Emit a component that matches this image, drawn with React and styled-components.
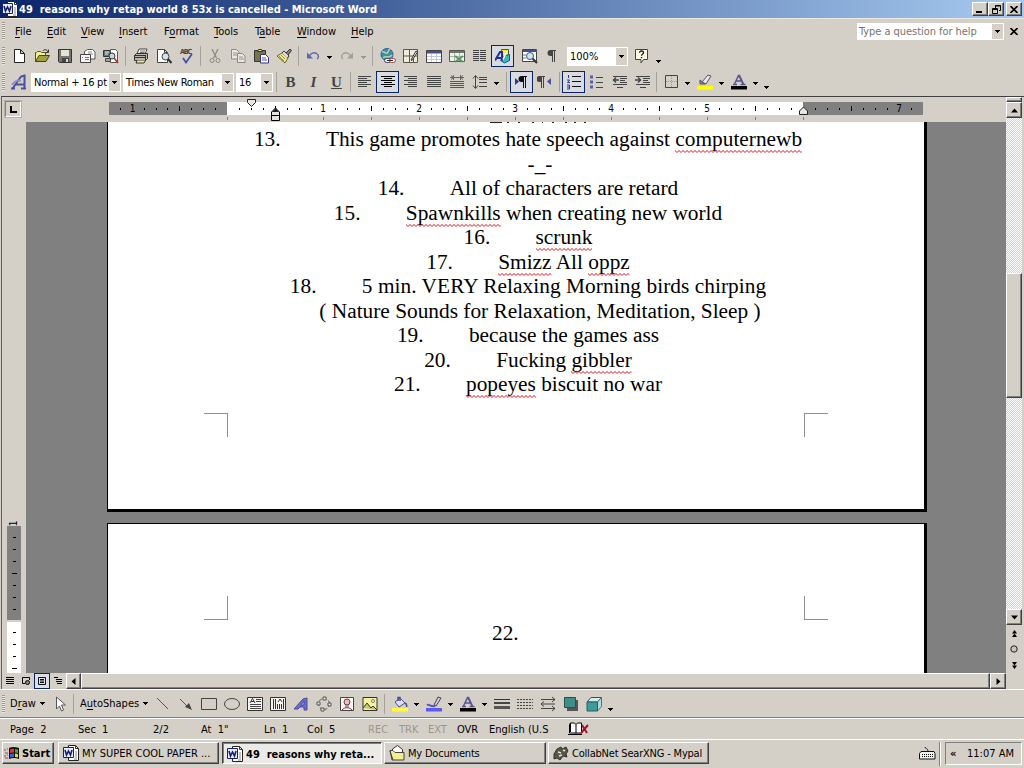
import React from 'react';
import styled, { createGlobalStyle, css } from 'styled-components';

const GlobalStyle = createGlobalStyle`
    body {
        margin: 0;
        overflow: hidden;
        background: #d4d0c8;
        font-family: 'DejaVu Sans Condensed', 'DejaVu Sans', sans-serif;
        font-size: 11px;
        color: #000;
    }
    * {
        box-sizing: border-box;
    }
`;

const raised = css`
    background: #d4d0c8;
    border: 1px solid;
    border-color: #fff #404040 #404040 #fff;
    box-shadow: inset -1px -1px 0 #808080;
`;

const Screen = styled.div`
    width: 1024px;
    height: 768px;
    display: flex;
    flex-direction: column;
    background: #d4d0c8;
    white-space: pre;
    cursor: default;
`;

/* title bar */
const TitleBar = styled.div`
    height: 18px;
    flex: none;
    display: flex;
    align-items: center;
    padding: 0 2px;
    background: linear-gradient(90deg, #0a246a, #a6caf0);
    color: #fff;
`;
const TitleText = styled.div`
    flex: 1;
    padding-left: 1px;
    font-weight: bold;
`;
const WindowButton = styled.div`
    ${raised}
    width: 16px;
    height: 14px;
    margin-left: ${p => p.$gap || 0}px;
    display: flex;
    align-items: center;
    justify-content: center;
`;

/* menu bar */
const MenuBar = styled.div`
    height: 25px;
    flex: none;
    display: flex;
    align-items: center;
    border-top: 1px solid #ece9e2;
`;
const Handle = styled.div`
    width: 3px;
    height: 18px;
    margin: 0 ${p => p.$after || 2}px 0 2px;
    background: repeating-linear-gradient(#9c9890 0 1px, #ece9e2 1px 2px);
`;
const MenuItem = styled.div`
    width: ${p => p.$w}px;
    u {
        text-underline-offset: 2px;
    }
`;
const Question = styled.div`
    width: 147px;
    height: 17px;
    margin-left: auto;
    display: flex;
    align-items: center;
    background: #fff;
    color: #77736d;
    padding-left: 2px;
    letter-spacing: -0.05px;
`;
const ComboArrow = styled.div`
    width: 11px;
    height: calc(100% - 2px);
    margin: 1px 1px 1px auto;
    background: #d4d0c8;
    display: flex;
    align-items: center;
    justify-content: center;
`;
const CloseDoc = styled.div`
    width: 20px;
    display: flex;
    justify-content: center;
`;

/* toolbars */
const Toolbar = styled.div`
    height: ${p => p.$h || 26}px;
    flex: none;
    display: flex;
    align-items: center;
    margin-bottom: ${p => p.$after || 0}px;
    ${p => p.$line && css`
        border-top: 1px solid #fff;
        border-bottom: 1px solid #808080;
    `}
`;
const ToolButton = styled.div`
    width: 23px;
    height: 22px;
    flex: none;
    display: flex;
    align-items: center;
    justify-content: center;
    border: 1px solid ${p => (p.$on ? '#0a246a' : 'transparent')};
    background: ${p => (p.$on ? '#d9dbe2' : 'transparent')};
`;
const DropArrow = styled.div`
    width: 11px;
    flex: none;
    display: flex;
    justify-content: center;
    padding-top: ${p => (p.$low ? 11 : 2)}px;
`;
const Separator = styled.div`
    width: ${p => p.$w}px;
    height: 20px;
    flex: none;
    display: flex;
    justify-content: center;
    &::before {
        content: '';
        width: 1px;
        background: ${p => (p.$blank ? 'transparent' : '#a6a299')};
    }
`;
const Combo = styled.div`
    width: ${p => p.$w}px;
    height: 19px;
    flex: none;
    margin: 0 ${p => p.$after || 0}px 0 ${p => p.$before || 0}px;
    padding-left: 3px;
    display: flex;
    align-items: center;
    background: #fff;
    letter-spacing: ${p => p.$spacing || 0}px;
`;
const TextButton = styled.div`
    width: ${p => p.$w}px;
    flex: none;
    display: flex;
    align-items: center;
    gap: 4px;
    padding-left: ${p => p.$pad}px;
    u {
        text-underline-offset: 2px;
    }
`;

/* work area */
const WorkArea = styled.div`
    height: 593px;
    flex: none;
    display: flex;
    border-top: 1px solid #404040;
    border-left: 1px solid #606060;
    margin-left: 1px;
`;
const Editor = styled.div`
    width: 1004px;
    display: flex;
    flex-direction: column;
`;
const RulerRow = styled.div`
    position: relative;
    height: 25px;
    flex: none;
    display: flex;
    align-items: flex-start;
    padding: 5px 0 0 3px;
`;
const TabBox = styled.div`
    width: 16px;
    height: 16px;
    margin: -1px 88px 0 0;
    border: 1px solid #808080;
    border-right-color: #fff;
    border-bottom-color: #fff;
    outline: 1px solid #b4b0a8;
    display: flex;
    align-items: center;
    justify-content: center;
`;
const RulerPart = styled.div`
    width: ${p => p.$w}px;
    height: 13px;
    display: flex;
    justify-content: ${p => p.$align || 'flex-start'};
    padding: 0 6px;
    background: ${p => (p.$margin ? '#808080' : '#fff')};
`;
const RulerCell = styled.div`
    width: 12px;
    display: flex;
    align-items: center;
    justify-content: center;
    font-size: 10px;
`;
const Tick = styled.div`
    width: 1px;
    height: ${p => (p.$long ? 5 : 2)}px;
    background: #000;
`;
const TabStops = styled.div`
    position: absolute;
    left: 225px;
    top: 20px;
    width: 577px;
    height: 3px;
    background: repeating-linear-gradient(90deg, #808080 0 1px, transparent 1px 48px);
`;
const Marker = styled.svg`
    position: absolute;
    left: ${p => p.$x}px;
    top: ${p => p.$y}px;
`;
const EditorBody = styled.div`
    height: 551px;
    flex: none;
    display: flex;
`;
const VRuler = styled.div`
    width: 24px;
    flex: none;
    padding: 398px 5px 0 5px;
    display: flex;
    flex-direction: column;
    overflow: hidden;
`;
const VRulerPart = styled.div`
    height: ${p => p.$h}px;
    flex: none;
    margin-bottom: 2px;
    padding-top: ${p => p.$pad}px;
    background: ${p => (p.$margin ? '#808080' : '#fff')};
    overflow: hidden;
`;
const VNumber = styled.div`
    height: 6px;
    display: flex;
    align-items: center;
    justify-content: center;
    span {
        transform: rotate(-90deg);
        font-size: 10px;
    }
`;
const VCell = styled.div`
    height: 12px;
    display: flex;
    align-items: center;
    justify-content: center;
`;
const VTick = styled.div`
    height: 1px;
    width: ${p => (p.$long ? 5 : 3)}px;
    background: #000;
`;
const Canvas = styled.div`
    width: 980px;
    height: 551px;
    flex: none;
    overflow: hidden;
    background: #808080;
    padding-left: 81px;
`;
const Page = styled.div`
    position: relative;
    width: 820px;
    height: ${p => p.$h}px;
    margin-bottom: 11px;
    background: #fff;
    border: solid #000;
    border-width: ${p => (p.$first ? '0 3px 3px 1px' : '1px 3px 0 1px')};
    padding: ${p => p.$top}px 0 0 168px;
`;
const Corner = styled.div`
    position: absolute;
    width: 24px;
    height: 24px;
    left: ${p => p.$x}px;
    top: ${p => p.$y}px;
    border: 0 solid #909090;
    ${p => p.$sides.map(s => `border-${s}-width: 1px;`).join('')}
`;
const Remnant = styled.svg`
    position: absolute;
    left: 382px;
    top: 0;
`;
const Line = styled.div`
    width: 528px;
    height: 24px;
    line-height: 24px;
    margin-left: ${p => (p.$numbered ? -12 : 0)}px;
    display: flex;
    justify-content: center;
    font-family: 'Liberation Serif', serif;
    font-size: 21.33px;
    letter-spacing: ${p => p.$spacing || 0}px;
    &:nth-child(even) {
        height: 25px;
    }
`;
const Num = styled.span`
    width: 72px;
    flex: none;
    letter-spacing: 0;
`;
const Misspelled = styled.span`
    position: relative;
`;
const Squiggle = styled.svg`
    position: absolute;
    left: 0;
    bottom: -2px;
    width: 100%;
    height: 3px;
`;

/* scroll bars */
const HScrollRow = styled.div`
    height: 16px;
    flex: none;
    display: flex;
`;
const ViewButton = styled.div`
    width: 16px;
    height: 16px;
    display: flex;
    align-items: center;
    justify-content: center;
    border: 1px solid ${p => (p.$on ? '#0a246a' : 'transparent')};
    background: ${p => (p.$on ? '#dcdee6' : 'transparent')};
`;
const ScrollButton = styled.div`
    ${raised}
    width: ${p => p.$w || 16}px;
    height: 16px;
    flex: none;
    display: flex;
    align-items: center;
    justify-content: center;
`;
const HThumb = styled.div`
    ${raised}
    flex: 1;
`;
const VScroll = styled.div`
    width: 16px;
    display: flex;
    flex-direction: column;
    background: #d4d0c8;
`;
const Splitter = styled.div`
    ${raised}
    height: 5px;
    flex: none;
`;
const Track = styled.div`
    height: ${p => p.$h}px;
    flex: none;
    background: conic-gradient(#d4d0c8 25%, #fff 0 50%, #d4d0c8 0 75%, #fff 0) 0 0 / 2px 2px;
`;
const VThumb = styled.div`
    ${raised}
    height: 125px;
    flex: none;
`;
const Browse = styled.div`
    height: 16px;
    display: flex;
    align-items: center;
    justify-content: center;
`;

/* status bar */
const StatusBar = styled.div`
    height: 21px;
    flex: none;
    display: flex;
    align-items: center;
    padding-left: 10px;
    border-top: 1px solid #fff;
`;
const StatusCell = styled.div`
    width: ${p => p.$w}px;
    overflow: hidden;
    color: ${p => (p.$off ? '#9a968e' : '#000')};
`;

/* taskbar */
const TaskBar = styled.div`
    height: 29px;
    flex: none;
    display: flex;
    align-items: flex-start;
    padding: 2px 2px 0;
    border-top: 1px solid #fff;
`;
const StartButton = styled.div`
    ${raised}
    width: 52px;
    height: 22px;
    display: flex;
    align-items: center;
    gap: 2px;
    padding-left: 1px;
    font-weight: bold;
`;
const Task = styled.div`
    ${raised}
    width: ${p => p.$w}px;
    height: 22px;
    margin-left: ${p => p.$gap}px;
    display: flex;
    align-items: center;
    gap: 3px;
    padding-left: 4px;
    letter-spacing: ${p => p.$spacing || 0}px;
    ${p => p.$on && css`
        font-weight: bold;
        padding-top: 2px;
        background: #eceae6;
        border-color: #404040 #fff #fff #404040;
        box-shadow: inset 1px 1px 0 #808080;
    `}
`;
const TrayIcon = styled.div`
    margin: 4px 3px 0 auto;
`;
const TraySep = styled.div`
    width: 2px;
    height: 24px;
    background: #808080;
    border-right: 1px solid #fff;
    margin-right: 4px;
`;
const Tray = styled.div`
    width: 77px;
    height: 23px;
    display: flex;
    align-items: center;
    justify-content: space-between;
    padding: 0 7px 0 4px;
    border: 1px solid;
    border-color: #808080 #fff #fff #808080;
`;

const Svg = styled.svg`
    display: block;
    flex: none;
`;

const Icon = ({ w = 16, h = 16, children }) => (
    <Svg width={w} height={h} viewBox={`0 0 ${w} ${h}`} fill="none" stroke="#333" strokeWidth="1">
        {children}
    </Svg>
);

const Down = ({ off }) => (
    <Svg width="5" height="3" viewBox="0 0 5 3" shapeRendering="crispEdges">
        <path d="M0 0h5v1h-1v1h-1v1h-1v-1h-1v-1h-1z" fill={off ? '#99958d' : '#000'} />
    </Svg>
);

const Arrow = ({ dir }) => {
    const d = {
        up: 'M3.5 0L7 4H0z',
        down: 'M0 0h7L3.5 4z',
        left: 'M4 0v7L0 3.5z',
        right: 'M0 0v7l4-3.5z'
    }[dir];
    return <Svg width="7" height="7" viewBox={dir === 'up' || dir === 'down' ? '0 -1.5 7 7' : '-1.5 0 7 7'}><path d={d} fill="#000" /></Svg>;
};

const Cross = () => (
    <Svg width="8" height="7" viewBox="0 0 8 7" stroke="#000" strokeWidth="1.6"><path d="M.5 0l7 7M7.5 0l-7 7" /></Svg>
);

const WordIcon = () => (
    <Icon>
        <path d="M5.5.5h7l3 3v12h-10z" fill="#fff" stroke="#222" />
        <path d="M12.5.5v3h3" />
        <path d="M13 6v7M11 14h3" stroke="#888" />
        <path d="M.5 2.500h10v10h-10z" fill="#e8ecff" stroke="#15206f" />
        <path d="M2 5l1.500 5L5.500 6l2 4L9 5" stroke="#15206f" strokeWidth="1.6" />
    </Icon>
);

// rows of [x, width, y]
const bars = (rows, color = '#444') => rows.map(([x, w, y], i) => (
    <rect key={i} x={x} y={y} width={w} height="1" fill={color} stroke="none" />
));

const Pilcrow = ({ x = 3, color = '#444' }) => (
    <g stroke={color}>
        <path d={`M${x + 9} 2.500h-5M${x + 5.5} 2v12M${x + 7.5} 2v12`} />
        <path d={`M${x + 5.5} 2h-2a2.500 2.500 0 0 0 0 6h2z`} fill={color} stroke="none" />
    </g>
);

const LetterA = ({ color = '#5a5490' }) => (
    <path d="M3.500 10L7.500 1.500h1L12.500 10M5 7h6M2 10.500h4M9.500 10.500h5M8 2l4 8" stroke={color} strokeWidth="1.5" />
);

const icons = {
    blank: <path d="M3.500 1.500h6l4 4v9h-10zM9.500 1.500v4h4" fill="#fff" stroke="#222" />,
    open: <>
        <path d="M1.500 13.500v-9h1l1-1h3l1 1h4v3" fill="#f3f08c" stroke="#55551a" />
        <path d="M1.500 13.500l3.500-6h10.500l-3.500 6z" fill="#a3a13c" stroke="#444410" />
        <path d="M9 3c1-2 4-2 5 1M14.500 1.500v3h-3" />
    </>,
    save: <>
        <path d="M1.500 1.500h13v13h-12l-1-1z" fill="#77776a" stroke="#333" />
        <path d="M4 2h8v6H4z" fill="#e4e2dc" stroke="none" />
        <path d="M5 10h7v4H5z" fill="#444" stroke="none" />
        <path d="M9 11h2v3H9z" fill="#ddd" stroke="none" />
    </>,
    mail: <>
        <path d="M4.500 6V3.500l3-2h5l2.500 2.500v7h-4" fill="#fff" stroke="#555" />
        <path d="M8 4h4M8 6h5" stroke="#888" />
        <path d="M.5 6.500h10v8h-10z" fill="#f6f4ee" stroke="#444" />
        <path d="M5 9.500h4M5 11.500h4M2 9.500h1" stroke="#777" />
    </>,
    search: <>
        <path d="M.5 2.500h8v6h-8z" fill="#5c7784" stroke="#333" />
        <path d="M7.500 1.500h5l2 2v11h-7z" fill="#fff" stroke="#555" />
        <path d="M2 4h4M2 6h3" stroke="#e6eef0" />
        <path d="M2.500 10.500h5v3h-5z" fill="#aaa69b" stroke="#444" />
        <circle cx="9" cy="8" r="3" fill="#c0dada" stroke="#333" />
        <path d="M11 10l4 5" stroke="#a33" strokeWidth="1.6" />
    </>,
    print: <>
        <path d="M4 6l2-5h8l-2 5z" fill="#fff" stroke="#444" />
        <path d="M7 3h5M6.500 4.500h5" stroke="#777" />
        <path d="M1.500 7.500l2-2h11v5l-2 2h-11z" fill="#bbb7ab" stroke="#333" />
        <path d="M2 9.500h11M12.500 7v6M4 12.500l-1 2.500h8l1.500-2.500" fill="#f0e9a0" />
        <path d="M1.500 7.500h11" />
    </>,
    preview: <>
        <path d="M1.500 1.500h7l3 3v10h-10zM8.500 1.500v3h3" fill="#fff" stroke="#444" />
        <circle cx="9.500" cy="8.500" r="3.500" fill="#cfe4e4" stroke="#445" />
        <path d="M12 11l3.500 4" strokeWidth="2" />
    </>,
    spell: <>
        <text x="1" y="6" fontSize="7" fontWeight="bold" fill="#444" stroke="none" textLength="12">ABC</text>
        <path d="M4 10l3 4.500L13 6" stroke="#4b4fa8" strokeWidth="1.8" />
    </>,
    cut: <>
        <path d="M5 1l4.500 9M11 1L6.500 10" stroke="#8e8a82" strokeWidth="1.300" />
        <circle cx="5" cy="12.500" r="2" stroke="#8e8a82" />
        <circle cx="11" cy="12.500" r="2" stroke="#8e8a82" />
    </>,
    copy: <>
        <path d="M1.500 1.500h5l2.500 2.500v7h-7.500z" fill="#e8e6e0" stroke="#8e8a82" />
        <path d="M7.500 5.500h5l2.500 2.500v6.500h-7.500z" fill="#e8e6e0" stroke="#8e8a82" />
        <path d="M3 5h4M3 7h4M9 9h4M9 11h5" stroke="#9a968e" />
    </>,
    paste: <>
        <path d="M1.500 2.500h11v11h-11z" fill="#77764a" stroke="#333" />
        <path d="M4.500 3.500l1-2h3l1 2z" fill="#e9e695" stroke="#333" />
        <path d="M7.500 6.500h5l3 3v5.500h-8z" fill="#fff" stroke="#34347c" />
        <path d="M9 10h4M9 12h5" stroke="#5c5cab" />
    </>,
    painter: <>
        <path d="M1 8l5-3 6 5-3 5z" fill="#f2e78e" stroke="#6b652b" />
        <path d="M6 5l2-2 5 5-1.500 2" fill="#ddd" />
        <path d="M10 5l4-4 1.500 1.500L12 7" fill="#8a856c" />
        <path d="M3 8l5 5M5 7l4 4" stroke="#9c9240" />
    </>,
    undo: <>
        <path d="M2 4.500v6h6z" fill="#5a68a8" stroke="none" />
        <path d="M4 8.500C6 5 9 4 11.500 5.500s2.500 4 .5 5.500" stroke="#5a68a8" strokeWidth="1.400" />
    </>,
    redo: <>
        <path d="M14 4.500v6H8z" fill="#a29e96" stroke="none" />
        <path d="M12 8.500C10 5 7 4 4.500 5.500s-2.500 4-.5 5.500" stroke="#a29e96" strokeWidth="1.400" />
    </>,
    link: <>
        <circle cx="7" cy="6.500" r="6" fill="#3f8f94" stroke="#3d5a9a" />
        <path d="M2 4c3-1 3 2 5 1s1-3 3-4M3 10c3-3 6 1 9-3" stroke="#a9d3c2" strokeWidth="1.500" />
        <rect x="4.500" y="10.500" width="6" height="4" rx="2" fill="#eee" stroke="#445" />
        <rect x="9.500" y="10.500" width="6" height="4" rx="2" fill="#eee" stroke="#a34a55" />
        <path d="M7 12.500h6" />
    </>,
    tables: <>
        <path d="M.5 1.500h14v13H.5zM.5 8h14M6.500 1.500v13M10.500 8v6" fill="#eeecdf" stroke="#5a5744" />
        <path d="M8 12l5-9 1.500 1L9 12.500z" fill="#fff" />
    </>,
    table: <>
        <path d="M.5 2.500h15v12H.5z" fill="#fff" stroke="#444" />
        <path d="M1 3h14v2.500H1z" fill="#46508e" stroke="none" />
        <path d="M1 8.500h14M1 11.500h14M5.500 6v8M10.500 6v8" stroke="#c6c8d8" />
    </>,
    excel: <>
        <path d="M.5 2.500h15v11H.5z" fill="#eef4ec" stroke="#555" />
        <path d="M1 3h14v2H1z" fill="#6a7b6a" stroke="none" />
        <path d="M1 8.500h14M5.500 5v8M10.500 5v8" stroke="#a8b8a8" />
        <path d="M6 8l8 6M14 8l-8 6" stroke="#5c9464" strokeWidth="2" />
    </>,
    columns: bars([2, 4, 6, 8, 10, 12].flatMap(y => [[1, 6, y], [8, 6, y]])),
    drawing: <>
        <path d="M6.500 1.500h7v8h-7z" fill="#f4f03c" stroke="#55551a" />
        <path d="M8.500 8l6-1.500v6l-5 2.500-4-2.500z" fill="#38b8c0" stroke="#1d5a80" />
        <path d="M0 12.500L5 4h2v8.500M2 10h5" stroke="#22309c" strokeWidth="2" />
        <path d="M8 11.500l4-8.500" stroke="#fff" strokeWidth="1.500" />
    </>,
    docmap: <>
        <path d="M.5 1.500h14v12H.5z" fill="#fff" stroke="#444" />
        <path d="M1 2h14v2H1z" fill="#46508e" stroke="none" />
        <path d="M1 7h3M1 10h3" stroke="#777" />
        <circle cx="8" cy="8" r="3.500" fill="#d2e8ee" stroke="#355590" />
        <path d="M10.500 10.500l4.500 4.500" strokeWidth="2" />
    </>,
    pilcrow: <Pilcrow x={2} />,
    help: <>
        <path d="M1.500 1.500h12v10h-4l-2.500 3.500v-3.500H1.500z" fill="#fbfae6" stroke="#444" />
        <path d="M5.500 4.800c0-2.500 4-2.200 4 0 0 1.500-2 1.500-2 3M7.500 9v1.300" stroke="#222" strokeWidth="1.400" />
    </>,
    styles: <>
        <path d="M2 14l8-11.500 3.500-1v12.500M5 10.500h8M10 14.500h5M0 14.500h4" stroke="#4a4f9e" strokeWidth="2" />
        <path d="M1 11c3-5 7-5 9-4" stroke="#8f92c4" strokeWidth="2" />
    </>,
    left: bars([[1, 13, 2], [1, 9, 4], [1, 13, 6], [1, 9, 8], [1, 13, 10], [1, 9, 12]]),
    center: bars([[1, 14, 2], [4, 8, 4], [1, 14, 6], [4, 8, 8], [1, 14, 10], [4, 8, 12]], '#000'),
    right: bars([[1, 13, 2], [5, 9, 4], [1, 13, 6], [5, 9, 8], [1, 13, 10], [5, 9, 12]]),
    justify: bars([2, 4, 6, 8, 10, 12].map(y => [1, 14, y])),
    distribute: <>
        <path d="M1 3.500h14M4.500 1v5M11.500 1v5M2 1.500l2.500 2-2.500 2M14 1.500l-2.500 2 2.500 2" stroke="#666" />
        {bars([[1, 14, 7], [1, 14, 9], [1, 14, 11], [1, 14, 13]], '#555')}
    </>,
    spacing: <>
        <path d="M3.500 2v12M1 4.500l2.500-3 2.500 3M1 11.500l2.500 3 2.500-3" stroke="#444" />
        {bars([[7, 8, 3], [7, 8, 5], [7, 8, 8], [7, 8, 12]])}
    </>,
    ltr: <>
        <path d="M1 4l4 3.500L1 11z" fill="#2d3494" stroke="none" />
        <Pilcrow x={4} color="#111" />
    </>,
    rtl: <>
        <path d="M14 4l-4 3.500 4 3.500z" fill="#4a50a8" stroke="none" />
        <Pilcrow x={-1} />
    </>,
    numbers: <>
        <path d="M2.500 1v3M1 6h2.500l-2 2.500h2.500M1 11h2.500v4H1M1 13h2" stroke="#2d3494" />
        {bars([[6, 9, 2], [6, 9, 7], [6, 9, 12]], '#111')}
    </>,
    bullets: <>
        <path d="M1 1.500h3v3H1zM1 6.500h3v3H1zM1 11.500h3v3H1z" fill="#5a5fa8" stroke="none" />
        {bars([[7, 7, 3], [7, 7, 8], [7, 7, 13]])}
    </>,
    outdent: <>
        {bars([[1, 14, 2], [8, 7, 4], [8, 5, 6], [8, 7, 8], [1, 14, 10], [5, 6, 13]])}
        <path d="M7 6H1M4 3.500L1.500 6 4 8.500" stroke="#444" strokeWidth="1.400" />
    </>,
    indent: <>
        {bars([[1, 14, 2], [8, 7, 4], [8, 5, 6], [8, 7, 8], [1, 14, 10], [5, 6, 13]])}
        <path d="M0 6h6M3 3.500L5.500 6 3 8.500" stroke="#444" strokeWidth="1.400" />
    </>,
    border: <>
        <path d="M2.500 1.500h12v12h-12z" stroke="#444" />
        <path d="M8.500 2v11M3 7.500h11" stroke="#999" strokeDasharray="1 1" />
    </>,
    highlight: <>
        <path d="M5 8l6-7 3 1-5 8z" fill="#e8e6ee" stroke="#555" />
        <path d="M3 6l5 4H3z" fill="#8084cc" stroke="#555" />
        <path d="M0 12h16v3.500H0z" fill="#ffff00" stroke="none" />
    </>,
    fontColor: <>
        <LetterA />
        <path d="M0 12h16v3.500H0z" fill="#000" stroke="none" />
    </>,
    pointer: <path d="M4.500 1v12l3-3 2 5 2-1-2-5h4z" fill="#fff" stroke="#555" />,
    line: <path d="M2 2l11 11" stroke="#555" />,
    arrow: <><path d="M2 3l8 8" stroke="#555" /><path d="M14 14l-7-3 4-4z" fill="#444" stroke="none" /></>,
    rect: <path d="M.5 2.500h15v11H.5z" stroke="#444" />,
    ellipse: <ellipse cx="8" cy="8" rx="7.500" ry="5.500" stroke="#444" />,
    textbox: <>
        <path d="M.5 1.500h15v13H.5z" fill="#f6f4f0" />
        <path d="M3 7l2.500-4.500L8 7M4 5.500h3" />
        {bars([[9, 5, 3], [9, 5, 5], [3, 11, 8], [3, 11, 10], [3, 11, 12]])}
    </>,
    vtextbox: <>
        <path d="M.5 1.500h15v13H.5z" fill="#f6f4f0" />
        <path d="M3.500 3v10M5.500 3v10M7.500 8v5M9.500 8v5M11.500 8v5M13.500 3v10M8 6l2-3 2 3" />
    </>,
    wordart: <path fillRule="evenodd" d="M1 13l9-10 4-1v12h-3v-3H7l-2 2zM8 9h3V5z" fill="#6a6bd4" stroke="#4b4c98" />,
    diagram: <>
        <circle cx="8" cy="8" r="5.500" strokeDasharray="3 2" stroke="#555" />
        <path d="M7 1h3v3H7zM1 6h3v3H1zM12 7h3v3h-3zM5 12h3v3H5z" fill="#e9e7e2" stroke="#555" />
    </>,
    clipart: <>
        <path d="M1.500 1.500h13v13h-13z" fill="#faf6f4" stroke="#444" />
        <circle cx="8" cy="6" r="3" fill="#e6c0bc" stroke="#6b3a3a" />
        <path d="M7 9v3M9 9v3M3 14c2-3 8-3 10 0" stroke="#8b4444" />
    </>,
    picture: <>
        <path d="M1 1.500h14v13H1z" fill="#f6f49a" stroke="#333" />
        <circle cx="11" cy="5" r="1.500" fill="#fff" stroke="#777" />
        <path d="M1 12l4-5 4 5 2-2 4 4" fill="#c9c76a" />
    </>,
    fill: <>
        <path d="M3 6l5-4 5 5-6 4z" fill="#dfdff0" stroke="#4a4c94" />
        <path d="M6 5V1.500h2V5M13 7c2 1 2 2 1.500 4" stroke="#4a4c94" strokeWidth="1.500" />
        <path d="M0 12h16v3.500H0z" fill="#ffff40" stroke="none" />
    </>,
    lineColor: <>
        <path d="M8 9l4-8 3 1-5 8z" fill="#cfcfda" stroke="#444" />
        <path d="M1 9c2-1 4 2 8 1" stroke="#5557c0" strokeWidth="2" />
        <path d="M0 12h16v3.500H0z" fill="#5a5cf0" stroke="none" />
    </>,
    lineStyle: <>
        <path d="M0 3.500h16" />
        <path d="M0 7h16" strokeWidth="2" stroke="#444" />
        <path d="M0 11.500h16" strokeWidth="3" stroke="#555" />
    </>,
    dashStyle: <path d="M0 3.500h16M0 6.500h16M0 9.500h16M0 12.500h16" stroke="#444" strokeDasharray="2 1" />,
    arrowStyle: <path d="M1 3.500h14M1 8h14M1 12.500h14M12 1l3 2.500L12 6M4 5.500L1 8l3 2.500M12 10l3 2.500-3 2.500" stroke="#444" />,
    shadow: <>
        <path d="M4 4h11v11H4z" fill="#555" stroke="none" />
        <path d="M1.500 1.500h11v10h-11z" fill="#3d8f8a" stroke="#2a4f50" />
    </>,
    cube: <>
        <path d="M1 6l4-4.500h10.500L11.500 6z" fill="#d5eeee" stroke="#447" />
        <path d="M11.500 6l4-4.500v9l-4 4.500z" fill="#b5dcdc" stroke="#477" />
        <path d="M1 6h10.500v9H1z" fill="#3d9c98" stroke="#2a5f60" />
    </>
};

const Tool = ({ name, on }) => (
    <ToolButton $on={on}>
        <Icon>{icons[name]}</Icon>
    </ToolButton>
);
const Tools = ({ names }) => names.split(' ').map(n => <Tool key={n} name={n} />);
const Drop = props => <DropArrow $low={props.low}><Down off={props.off} /></DropArrow>;

const menus = [
    ['F', 'ile', 32], ['E', 'dit', 34], ['V', 'iew', 38], ['I', 'nsert', 45], ['', 'Format', 50],
    ['T', 'ools', 41], ['', 'Table', 42], ['W', 'indow', 54], ['H', 'elp', 40]
];

const StandardToolbar = () => (
    <Toolbar>
        <Handle />
        <Tools names="blank open save mail search" />
        <Separator $w={7} />
        <Tools names="print preview spell" />
        <Separator $w={5} />
        <Tools names="cut copy paste painter" />
        <Separator $w={6} />
        <Tool name="undo" />
        <Drop />
        <Tool name="redo" />
        <Drop off />
        <Separator $w={7} />
        <Tools names="link tables table excel columns" />
        <Tool name="drawing" on />
        <Separator $w={4} $blank />
        <Tools names="docmap pilcrow" />
        <Combo $w={61} $before={3} $after={2}>100%<ComboArrow><Down /></ComboArrow></Combo>
        <Tool name="help" />
        <Drop low />
    </Toolbar>
);

const GlyphButton = styled(ToolButton)`
    font: bold 15px 'Liberation Serif', serif;
    color: #444;
    font-style: ${p => (p.$italic ? 'italic' : 'normal')};
    text-decoration: ${p => (p.$underline ? 'underline' : 'none')};
`;

const FormattingToolbar = () => (
    <Toolbar $after={1}>
        <Handle />
        <Tool name="styles" />
        <Combo $w={90} $before={1} $after={2} $spacing={-0.25}>Normal + 16 pt<ComboArrow><Down /></ComboArrow></Combo>
        <Combo $w={111} $after={2} $spacing={-0.25}>Times New Roman<ComboArrow><Down /></ComboArrow></Combo>
        <Combo $w={37} $spacing={-0.25}>16<ComboArrow><Down /></ComboArrow></Combo>
        <Separator $w={6} />
        <GlyphButton>B</GlyphButton>
        <GlyphButton $italic>I</GlyphButton>
        <GlyphButton $underline>U</GlyphButton>
        <Separator $w={5} />
        <Tool name="left" />
        <Tool name="center" on />
        <Tools names="right justify distribute spacing" />
        <Drop />
        <Separator $w={8} />
        <Tool name="ltr" on />
        <Tool name="rtl" />
        <Separator $w={6} />
        <Tool name="numbers" on />
        <Tools names="bullets outdent indent" />
        <Separator $w={5} />
        <Tool name="border" />
        <Drop />
        <Tool name="highlight" />
        <Drop />
        <Tool name="fontColor" />
        <Drop />
        <Drop low />
    </Toolbar>
);

const DrawingToolbar = () => (
    <Toolbar $h={29} $line>
        <Handle />
        <TextButton $w={41} $pad={3}><span>D<u>r</u>aw</span><Down /></TextButton>
        <Tool name="pointer" />
        <Separator $w={5} />
        <TextButton $w={75} $pad={4}><span>A<u>u</u>toShapes</span><Down /></TextButton>
        <Tools names="line arrow rect ellipse textbox vtextbox wordart diagram clipart picture" />
        <Separator $w={7} />
        <Tool name="fill" />
        <Drop />
        <Tool name="lineColor" />
        <Drop />
        <Tool name="fontColor" />
        <Drop />
        <Tools names="lineStyle dashStyle arrowStyle shadow cube" />
        <Drop low />
    </Toolbar>
);

// one entry per 1/8 inch, counted from the left margin
const RulerTicks = ({ from, to }) => {
    const cells = [];
    for (let i = from; i <= to; i++) {
        cells.push(
            <RulerCell key={i}>
                {i % 8 === 0 ? Math.abs(i / 8) : <Tick $long={i % 4 === 0} />}
            </RulerCell>
        );
    }
    return cells;
};

const Ruler = () => (
    <RulerRow>
        <TabBox>
            <Svg width="7" height="7" viewBox="0 0 7 7"><path d="M0 0h2v5h5v2H0z" fill="#000" /></Svg>
        </TabBox>
        <RulerPart $w={118} $margin $align="flex-end"><RulerTicks from={-9} to={-1} /></RulerPart>
        <RulerPart $w={576}><RulerTicks from={1} to={47} /></RulerPart>
        <RulerPart $w={120} $margin><RulerTicks from={49} to={57} /></RulerPart>
        <TabStops />
        <Marker $x={245} $y={2} width="10" height="9"><path d="M.5.5h8v3l-4 4-4-4z" fill="#e8e6e0" stroke="#222" /></Marker>
        <Marker $x={269} $y={10} width="10" height="15">
            <path d="M.5 8.500v-3.500l4-4 4 4v3.500zM.5 8.500h8v5h-8z" fill="#e8e6e0" stroke="#000" />
            <path d="M1 5l3.500-4L8 5z" fill="#222" />
        </Marker>
        <Marker $x={797} $y={9} width="10" height="10"><path d="M.5 8.500v-3.500l4-4 4 4v3.500z" fill="#e8e6e0" stroke="#222" /></Marker>
    </RulerRow>
);

const VerticalTicks = ({ list }) => list.split('').map((c, i) => (
    <VCell key={i}><VTick $long={c === '|'} /></VCell>
));

const SquigglePattern = () => (
    <defs>
        <pattern id="squiggle" width="4" height="3" patternUnits="userSpaceOnUse">
            <path d="M-1 -.5L2 2.500 5 -.5" fill="none" stroke="#e01822" strokeWidth="1" />
        </pattern>
    </defs>
);

const Typo = ({ children }) => (
    <Misspelled>
        {children}
        <Squiggle><rect width="100%" height="3" fill="url(#squiggle)" /></Squiggle>
    </Misspelled>
);

const Item = ({ n, children, spacing }) => (
    <Line $numbered={!!n} $spacing={spacing}>
        {n && <Num>{n}.</Num>}
        <span>{children}</span>
    </Line>
);

const Document = () => (
    <Canvas>
        <Page $first $h={390} $top={5}>
            <Remnant width="100" height="2" fill="#222">
                <SquigglePattern />
                <path d="M0 0h12v1H0zM17 0h2v1h-2zM28 0h2v1h-2zM42 0h2v1h-2zM52 0h1v1h-1zM62 0h2v1h-2zM75 0h2v1h-2zM84 0h2v1h-2zM94 0h2v1h-2z" />
            </Remnant>
            <Item n="13">This game promotes hate speech against <Typo>computernewb</Typo></Item>
            <Item>-_-</Item>
            <Item n="14">All of characters are retard</Item>
            <Item n="15"><Typo>Spawnkills</Typo> when creating new world</Item>
            <Item n="16"><Typo>scrunk</Typo></Item>
            <Item n="17"><Typo>Smizz</Typo> All <Typo>oppz</Typo></Item>
            <Item n="18" spacing={0.05}>5 min. VERY Relaxing Morning birds chirping</Item>
            <Item>( Nature Sounds for Relaxation, Meditation, Sleep )</Item>
            <Item n="19">because the games ass</Item>
            <Item n="20">Fucking <Typo>gibbler</Typo></Item>
            <Item n="21"><Typo>popeyes</Typo> biscuit no war</Item>
            <Corner $x={96} $y={291} $sides={['top', 'right']} />
            <Corner $x={696} $y={291} $sides={['top', 'left']} />
        </Page>
        <Page $h={160} $top={97}>
            <Item n="22" />
            <Corner $x={96} $y={72} $sides={['bottom', 'right']} />
            <Corner $x={696} $y={72} $sides={['bottom', 'left']} />
        </Page>
    </Canvas>
);

const BrowseArrow = ({ flip }) => (
    <Svg width="5" height="7" viewBox="0 0 7 8" preserveAspectRatio="none">
        <path d={flip ? 'M0 0h7L3.500 4zM0 4h7L3.500 8z' : 'M3.500 0L7 4H0zM3.500 4L7 8H0z'} fill="#000" />
    </Svg>
);

const Folder = () => (
    <Icon>
        <path d="M3.500 8V4l5-3.500 5 4V9" fill="#fff" />
        <path d="M1 5.500h3l2 2h9v7.500H3z" fill="#f2ee8c" stroke="#444" />
        <path d="M1 6l3 9" stroke="#444" />
    </Icon>
);

const App = () => (
    <Screen>
        <GlobalStyle />
        <TitleBar>
            <WordIcon />
            <TitleText>49  reasons why retap world 8 53x is cancelled - Microsoft Word</TitleText>
            <WindowButton><Svg width="8" height="8"><path d="M0 6h6v2H0z" fill="#000" /></Svg></WindowButton>
            <WindowButton>
                <Svg width="9" height="9" fill="none" stroke="#000"><path d="M3 1h5.500M3.500 3V.5h5v5H7M.5 3.500h5v5h-5zM.5 4.500h5" /></Svg>
            </WindowButton>
            <WindowButton $gap={2}><Cross /></WindowButton>
        </TitleBar>
        <MenuBar>
            <Handle $after={10} />
            {menus.map(([key, rest, w]) => (
                <MenuItem key={rest} $w={w}>
                    {key ? <><u>{key}</u>{rest}</> : rest === 'Format' ? <>F<u>o</u>rmat</> : <>T<u>a</u>ble</>}
                </MenuItem>
            ))}
            <Question>Type a question for help<ComboArrow><Down /></ComboArrow></Question>
            <CloseDoc><Cross /></CloseDoc>
        </MenuBar>
        <StandardToolbar />
        <FormattingToolbar />
        <WorkArea>
            <Editor>
                <Ruler />
                <EditorBody>
                    <VRuler>
                        <VNumber><span>1</span></VNumber>
                        <VRulerPart $h={94} $pad={5} $margin><VerticalTicks list="...|..." /></VRulerPart>
                        <VRulerPart $h={52} $pad={4}><VerticalTicks list="...|" /></VRulerPart>
                    </VRuler>
                    <Document />
                </EditorBody>
                <HScrollRow>
                    <ViewButton><Icon w={10} h={10}>{bars([[1, 8, 1], [1, 8, 3], [1, 8, 5], [1, 8, 7]], '#000')}</Icon></ViewButton>
                    <ViewButton><Icon w={10} h={10}><path d="M8.500 4v-2.500h-7v6H4" stroke="#000" /><circle cx="6.500" cy="6.500" r="2" fill="#888" stroke="#000" /></Icon></ViewButton>
                    <ViewButton $on><Icon w={10} h={10}><path d="M1.500 1.500h7v7h-7zM3 3.500h4M3 5h4M3 6.500h4" stroke="#111" /></Icon></ViewButton>
                    <ViewButton><Icon w={10} h={10}>{bars([[1, 4, 1], [3, 6, 3], [5, 4, 5], [3, 2, 5], [4, 5, 7]], '#000')}</Icon></ViewButton>
                    <ScrollButton $w={15}><Arrow dir="left" /></ScrollButton>
                    <HThumb />
                    <ScrollButton><Arrow dir="right" /></ScrollButton>
                </HScrollRow>
            </Editor>
            <VScroll>
                <Splitter />
                <ScrollButton><Arrow dir="up" /></ScrollButton>
                <Track $h={155} />
                <VThumb />
                <Track $h={211} />
                <ScrollButton><Arrow dir="down" /></ScrollButton>
                <Browse><BrowseArrow /></Browse>
                <Browse><Svg width="8" height="8"><circle cx="4" cy="4" r="3.200" fill="#c8c4bc" stroke="#222" /></Svg></Browse>
                <Browse><BrowseArrow flip /></Browse>
            </VScroll>
        </WorkArea>
        <DrawingToolbar />
        <StatusBar>
            <StatusCell $w={68}>Page  2</StatusCell>
            <StatusCell $w={75}>Sec  1</StatusCell>
            <StatusCell $w={48}>2/2</StatusCell>
            <StatusCell $w={63}>At  1"</StatusCell>
            <StatusCell $w={43}>Ln  1</StatusCell>
            <StatusCell $w={61}>Col  5</StatusCell>
            <StatusCell $w={31} $off>REC</StatusCell>
            <StatusCell $w={29} $off>TRK</StatusCell>
            <StatusCell $w={29} $off>EXT</StatusCell>
            <StatusCell $w={32}>OVR</StatusCell>
            <StatusCell $w={79}>English (U.S</StatusCell>
            <Icon w={21} h={14}>
                <path d="M1.500 2.500l1-1.500h4l1.500 1.500 1.500-1.500h4v10h-12z" fill="#fff" stroke="#000" />
                <path d="M8 2.500v9M0 12.500h14M2.500 1v9" stroke="#000" />
                <path d="M14 3l5 8M20 3l-7 8" stroke="#a3132c" strokeWidth="2" />
            </Icon>
        </StatusBar>
        <TaskBar>
            <StartButton>
                <Icon>
                    <path d="M5 3q4-2 10 0v11q-5-2-10 0z" fill="#111" stroke="none" />
                    <path d="M6 4.500q2-1 4-.6v3.600q-2-.4-4 .5z" fill="#d8362c" stroke="none" />
                    <path d="M11 4q2 0 3 .6v3.600q-1-.6-3-.6z" fill="#3fa33f" stroke="none" />
                    <path d="M6 9q2-.8 4-.5v3.500q-2-.3-4 .6z" fill="#3c5fd0" stroke="none" />
                    <path d="M11 8.600q2 0 3 .6v3.400q-1-.6-3-.6z" fill="#ecd63a" stroke="none" />
                    <path d="M0 5h2M3 4h1M1 8h3M0 11h2M3 10h1M1 13h3" stroke="#a33f6a" />
                </Icon>
                Start
            </StartButton>
            <Task $w={161} $gap={4}><WordIcon />MY SUPER COOL PAPER ...</Task>
            <Task $w={160} $gap={3} $on><WordIcon />49  reasons why reta...</Task>
            <Task $w={162} $gap={2} $spacing={-0.2}><Folder />My Documents</Task>
            <Task $w={161} $gap={2} $spacing={-0.2}>
                <Icon>
                    <path d="M1 9l3-5 4-2 1 2 4-2 2 4-2 3 1 3-4-1-3 4-3-2-3 1z" fill="#55564a" stroke="#33342c" />
                    <path d="M5 7l3 1M10 5l2 1M6 11l3-1" stroke="#e6e4d6" strokeWidth="1.500" />
                </Icon>
                CollabNet SearXNG - Mypal
            </Task>
            <TrayIcon>
                <Icon w={17} h={17}>
                    <path d="M6 1c0 2 3 1 3 4" stroke="#222" />
                    <path d="M2 5.500h13l1 2v5.500H.5V7.500z" fill="#f2f0ea" stroke="#111" />
                    <path d="M3 8.500h11M3 10.500h11" stroke="#111" strokeDasharray="1 1" />
                </Icon>
            </TrayIcon>
            <TraySep />
            <Tray><b>«</b><span>11:07 AM</span></Tray>
        </TaskBar>
    </Screen>
);

export default App;
